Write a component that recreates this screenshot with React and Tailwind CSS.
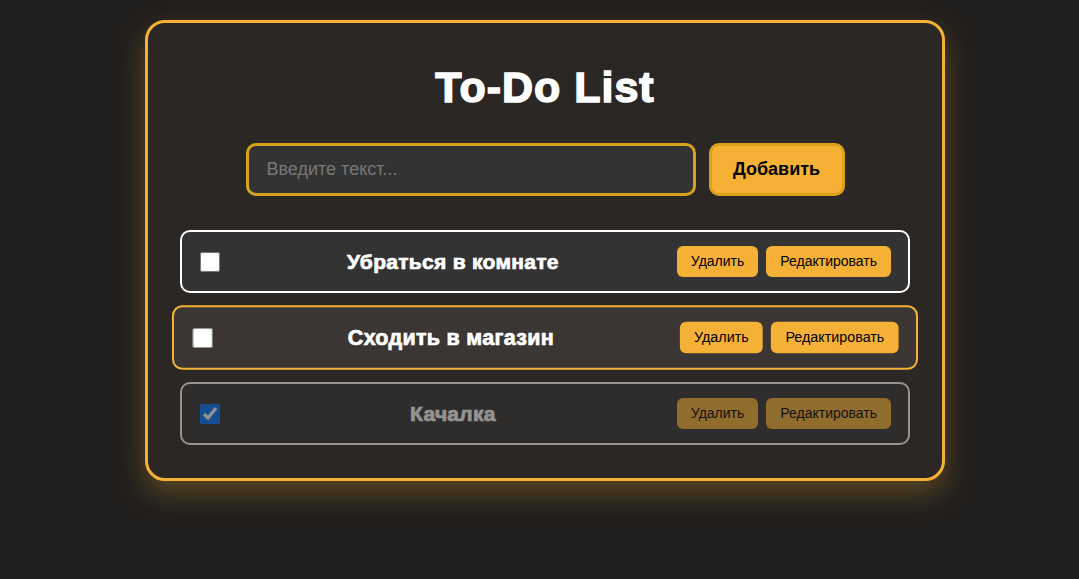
import React, { useState } from 'react';

const initialTasks = [
  { id: 1, text: 'Убраться в комнате', done: false },
  { id: 2, text: 'Сходить в магазин', done: false, hover: true },
  { id: 3, text: 'Качалка', done: true },
];

const TaskItem = ({ task, onToggle }) => {
  let box = 'border-white bg-[#333333]';
  if (task.hover) box = 'border-[#f4b136] bg-[#3b3634] scale-[1.022]';
  if (task.done) box = 'border-white bg-[#333333] opacity-50';

  return (
    <li className={`flex items-center gap-[10px] h-[63px] pl-[18px] pr-[17px] border-2 rounded-[10px] ${box}`}>
      <input
        type="checkbox"
        checked={task.done}
        onChange={() => onToggle(task.id)}
        className="w-5 h-5 m-0 shrink-0"
      />
      <span className="flex-1 pl-[9px] text-center text-[21px] font-bold tracking-[0.3px] text-white [-webkit-text-stroke:0.7px_white]">
        {task.text}
      </span>
      <div className="flex gap-2">
        <button className="h-[31px] px-[14px] rounded-[6px] bg-[#f4b136] text-[14px] text-black">Удалить</button>
        <button className="h-[31px] px-[14px] rounded-[6px] bg-[#f4b136] text-[14px] text-black">Редактировать</button>
      </div>
    </li>
  );
};

const App = () => {
  const [tasks, setTasks] = useState(initialTasks);
  const [text, setText] = useState('');

  const toggle = (id) => {
    setTasks(tasks.map(t => (t.id === id ? { ...t, done: !t.done } : t)));
  };

  return (
    <div className="min-h-[579px] bg-[#211f1d] pt-5 pl-[11px] font-['Liberation_Sans',Arial,sans-serif]">
      <div className="mx-auto w-[800px] border-[3px] border-[#f4b136] rounded-[20px] bg-[#2b2725] px-8 pt-[41px] pb-[33px] shadow-[0_12px_28px_rgba(244,177,54,0.28)]">
        <h1 className="text-center text-[43px] leading-[46px] font-bold tracking-[1px] text-white [-webkit-text-stroke:1.5px_white] [text-shadow:1px_1px_0_rgba(0,0,0,0.5)]">
          To-Do List
        </h1>
        <div className="flex justify-center gap-[13px] mt-[33px]">
          <input
            type="text"
            value={text}
            onChange={(e) => setText(e.target.value)}
            placeholder="Введите текст..."
            className="w-[450px] h-[53px] px-[18px] border-[3px] border-[#d9a21b] rounded-[10px] bg-[#333333] text-[18px] text-white placeholder:text-[#777777] outline-none"
          />
          <button className="w-[136px] h-[53px] border-[3px] border-[#d9a21b] rounded-[10px] bg-[#f4b136] text-[18px] font-bold text-black">
            Добавить
          </button>
        </div>
        <ul className="flex flex-col gap-[13px] mt-[34px]">
          {tasks.map(task => (
            <TaskItem key={task.id} task={task} onToggle={toggle} />
          ))}
        </ul>
      </div>
    </div>
  );
};

export default App;
